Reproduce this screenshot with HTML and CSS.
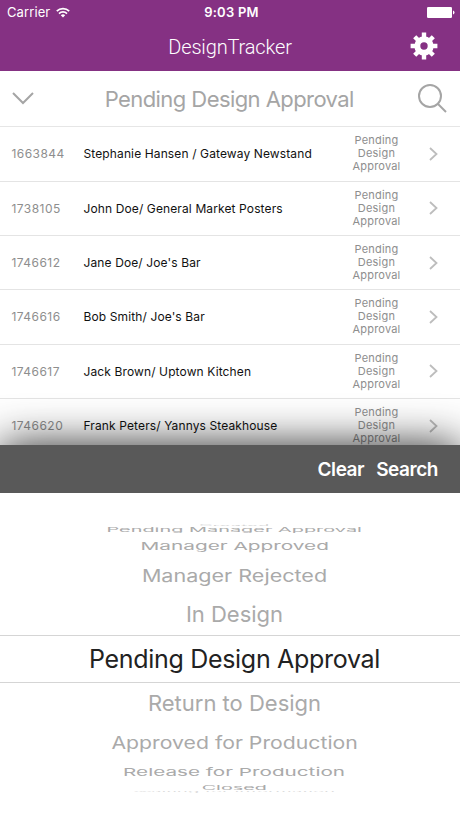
FILE: index.html
```html
<!DOCTYPE html>
<html lang="en">
<head>
<meta charset="utf-8">
<title>DesignTracker</title>
<link rel="stylesheet" href="styles.css">
</head>
<body>
<div class="app">
  <header class="header">
    <div class="status">
      <div class="carrier"><span>Carrier</span>
        <svg width="14" height="11" viewBox="0 0 14 11" fill="none" stroke="#fff" stroke-width="1.7"><path d="M.8 4.2a8.8 8.8 0 0 1 12.4 0M3 6.6a5.7 5.7 0 0 1 8 0"/><path d="M7 10.5 4.8 8.3a3.1 3.1 0 0 1 4.4 0z" fill="#fff" stroke="none"/></svg>
      </div>
      <span class="time">9:03 PM</span>
      <svg class="battery" width="28" height="11" viewBox="0 0 28 11" fill="#fff"><rect width="25" height="11" rx="1.3"/><path d="M26 3.5q1.5.5 1.5 2t-1.5 2z"/></svg>
    </div>
    <div class="nav">
      <h1>DesignTracker</h1>
      <svg class="gear" width="28" height="28" viewBox="-14 -14 28 28" fill="none" stroke="#fff"><circle r="6.7" stroke-width="6"/><path d="M0-13.4V-9M0 13.4V9M-13.4 0H-9M13.4 0H9M-9.3-9.3-6-6M9.3 9.3 6 6M-9.3 9.3-6 6M9.3-9.3 6-6" stroke-width="4.4"/></svg>
    </div>
  </header>
  <div class="filter">
    <svg width="22" height="13" viewBox="0 0 22 13" fill="none" stroke="#a5a5a5" stroke-width="2"><path d="m1 1 10 10L21 1"/></svg>
    <h2>Pending Design Approval</h2>
    <svg width="29" height="29" viewBox="0 0 29 29" fill="none" stroke="#a5a5a5" stroke-width="2"><circle cx="12" cy="12" r="11"/><path d="m20 20 8 8"/></svg>
  </div>
  <main class="list">
    <div class="row"><span class="id">1663844</span><span class="name">Stephanie Hansen / Gateway Newstand</span><span class="state">Pending<br>Design<br>Approval</span><svg class="chev" width="9" height="14" viewBox="0 0 9 14"><path d="m1 1 6.5 6L1 13"/></svg></div>
    <div class="row"><span class="id">1738105</span><span class="name">John Doe/ General Market Posters</span><span class="state">Pending<br>Design<br>Approval</span><svg class="chev" width="9" height="14" viewBox="0 0 9 14"><path d="m1 1 6.5 6L1 13"/></svg></div>
    <div class="row"><span class="id">1746612</span><span class="name">Jane Doe/ Joe's Bar</span><span class="state">Pending<br>Design<br>Approval</span><svg class="chev" width="9" height="14" viewBox="0 0 9 14"><path d="m1 1 6.5 6L1 13"/></svg></div>
    <div class="row"><span class="id">1746616</span><span class="name">Bob Smith/ Joe's Bar</span><span class="state">Pending<br>Design<br>Approval</span><svg class="chev" width="9" height="14" viewBox="0 0 9 14"><path d="m1 1 6.5 6L1 13"/></svg></div>
    <div class="row"><span class="id">1746617</span><span class="name">Jack Brown/ Uptown Kitchen</span><span class="state">Pending<br>Design<br>Approval</span><svg class="chev" width="9" height="14" viewBox="0 0 9 14"><path d="m1 1 6.5 6L1 13"/></svg></div>
    <div class="row"><span class="id">1746620</span><span class="name">Frank Peters/ Yannys Steakhouse</span><span class="state">Pending<br>Design<br>Approval</span><svg class="chev" width="9" height="14" viewBox="0 0 9 14"><path d="m1 1 6.5 6L1 13"/></svg></div>
  </main>
  <section class="sheet">
    <div class="toolbar"><span>Clear</span><span>Search</span></div>
    <div class="picker">
      <div class="opt o1"><span>Created</span></div>
      <div class="opt o2"><span>Pending Manager Approval</span></div>
      <div class="opt o3"><span>Manager Approved</span></div>
      <div class="opt o4"><span>Manager Rejected</span></div>
      <div class="opt o5"><span>In Design</span></div>
      <div class="opt selected"><span>Pending Design Approval</span></div>
      <div class="opt o7"><span>Return to Design</span></div>
      <div class="opt o8"><span>Approved for Production</span></div>
      <div class="opt o9"><span>Release for Production</span></div>
      <div class="opt o10"><span>Closed</span></div>
      <div class="opt o11"><span>Waiting for Information</span></div>
    </div>
  </section>
</div>
</body>
</html>
```
FILE: styles.css
```css
* { box-sizing: border-box; }
body { margin: 0; background: #fff; font-family: Inter, "Liberation Sans", sans-serif; }
.app { width: 460px; height: 818px; overflow: hidden; display: flex; flex-direction: column; }
h1, h2 { margin: 0; font-weight: 400; }
svg { display: block; flex: none; }
.header { height: 71px; background: #853183; color: #fff; flex: none; }
.status { height: 24px; display: grid; grid-template-columns: 1fr auto 1fr; align-items: center; padding: 0 5px 0 7px; font-size: 13px; }
.carrier { display: flex; align-items: center; gap: 6px; letter-spacing: .1px; }
.time { font-weight: 600; letter-spacing: .25px; padding-left: 1px; }
.battery { justify-self: end; }
.nav { height: 47px; display: grid; grid-template-columns: 1fr auto 1fr; align-items: center; padding: 0 22px; }
.nav h1 { grid-column: 2; font-family: Roboto, sans-serif; font-weight: 300; font-size: 20px; line-height: 24px; letter-spacing: -.15px; margin-top: -2px; }
.gear { justify-self: end; margin-top: -3px; }
.filter { height: 56.2px; flex: none; display: grid; grid-template-columns: 22px 1fr 29px; align-items: center; padding: 0 13.5px 0 12px; border-bottom: 1px solid #e6e6e6; color: #a5a5a5; }
.filter h2 { font-size: 22px; letter-spacing: -.57px; text-align: center; padding-left: 7px; }
.list { height: 317.8px; flex: none; overflow: hidden; }
.row { height: 54.35px; display: grid; grid-template-columns: 72px 259px 68px 1fr; align-items: center; padding-left: 11.5px; border-bottom: 1px solid #e4e4e4; font-size: 12px; letter-spacing: .12px; }
.id { color: #8e8e8e; letter-spacing: .45px; }
.name { color: #111; white-space: nowrap; }
.state { color: #8e8e8e; font-size: 11px; line-height: 13px; text-align: center; letter-spacing: .2px; }
.chev { margin-left: 18px; fill: none; stroke: #bdbdbd; stroke-width: 1.8; }
.sheet { position: relative; height: 373px; }
.toolbar { height: 48px; background: #595959; color: #fff; display: flex; justify-content: flex-end; align-items: center; gap: 12px; padding: 1px 22px 0 0; font-size: 19px; font-weight: 600; letter-spacing: -.45px; box-shadow: 0 0 44px rgba(0,0,0,.85); }
.picker { position: relative; height: 325px; background: #fff; padding-top: 30px; }
.opt { display: flex; align-items: center; justify-content: center; color: #aaa; font-size: 22px; white-space: nowrap; padding-left: 9px; }
.opt span { display: block; line-height: 28px; }
.o1 { height: 4px; opacity: .5; }
.o2 { height: 6px; }
.o3 { height: 26px; }
.o4 { height: 34px; }
.o5 { height: 42px; }
.selected { height: 48px; color: #222; font-size: 25px; letter-spacing: -.3px; border-top: 1px solid #d5d5d5; border-bottom: 1px solid #d5d5d5; }
.o7 { height: 41px; }
.o8 { height: 39px; }
.o9 { height: 20px; }
.o10 { height: 11px; }
.o11 { height: 1px; opacity: .4; }
.o1 span { transform: scale(.85, .08); }
.o2 span { transform: scale(.905, .25); }
.o3 span { transform: scale(.945, .5); }
.o4 span { transform: scale(.98, .78); }
.o8 span { transform: scale(.965, .78); }
.o9 span { transform: translateY(-1px) scale(.94, .5); }
.o10 span { transform: scale(.9, .25); }
.o11 span { transform: translateY(-2px) scale(.85, .05); }
```
